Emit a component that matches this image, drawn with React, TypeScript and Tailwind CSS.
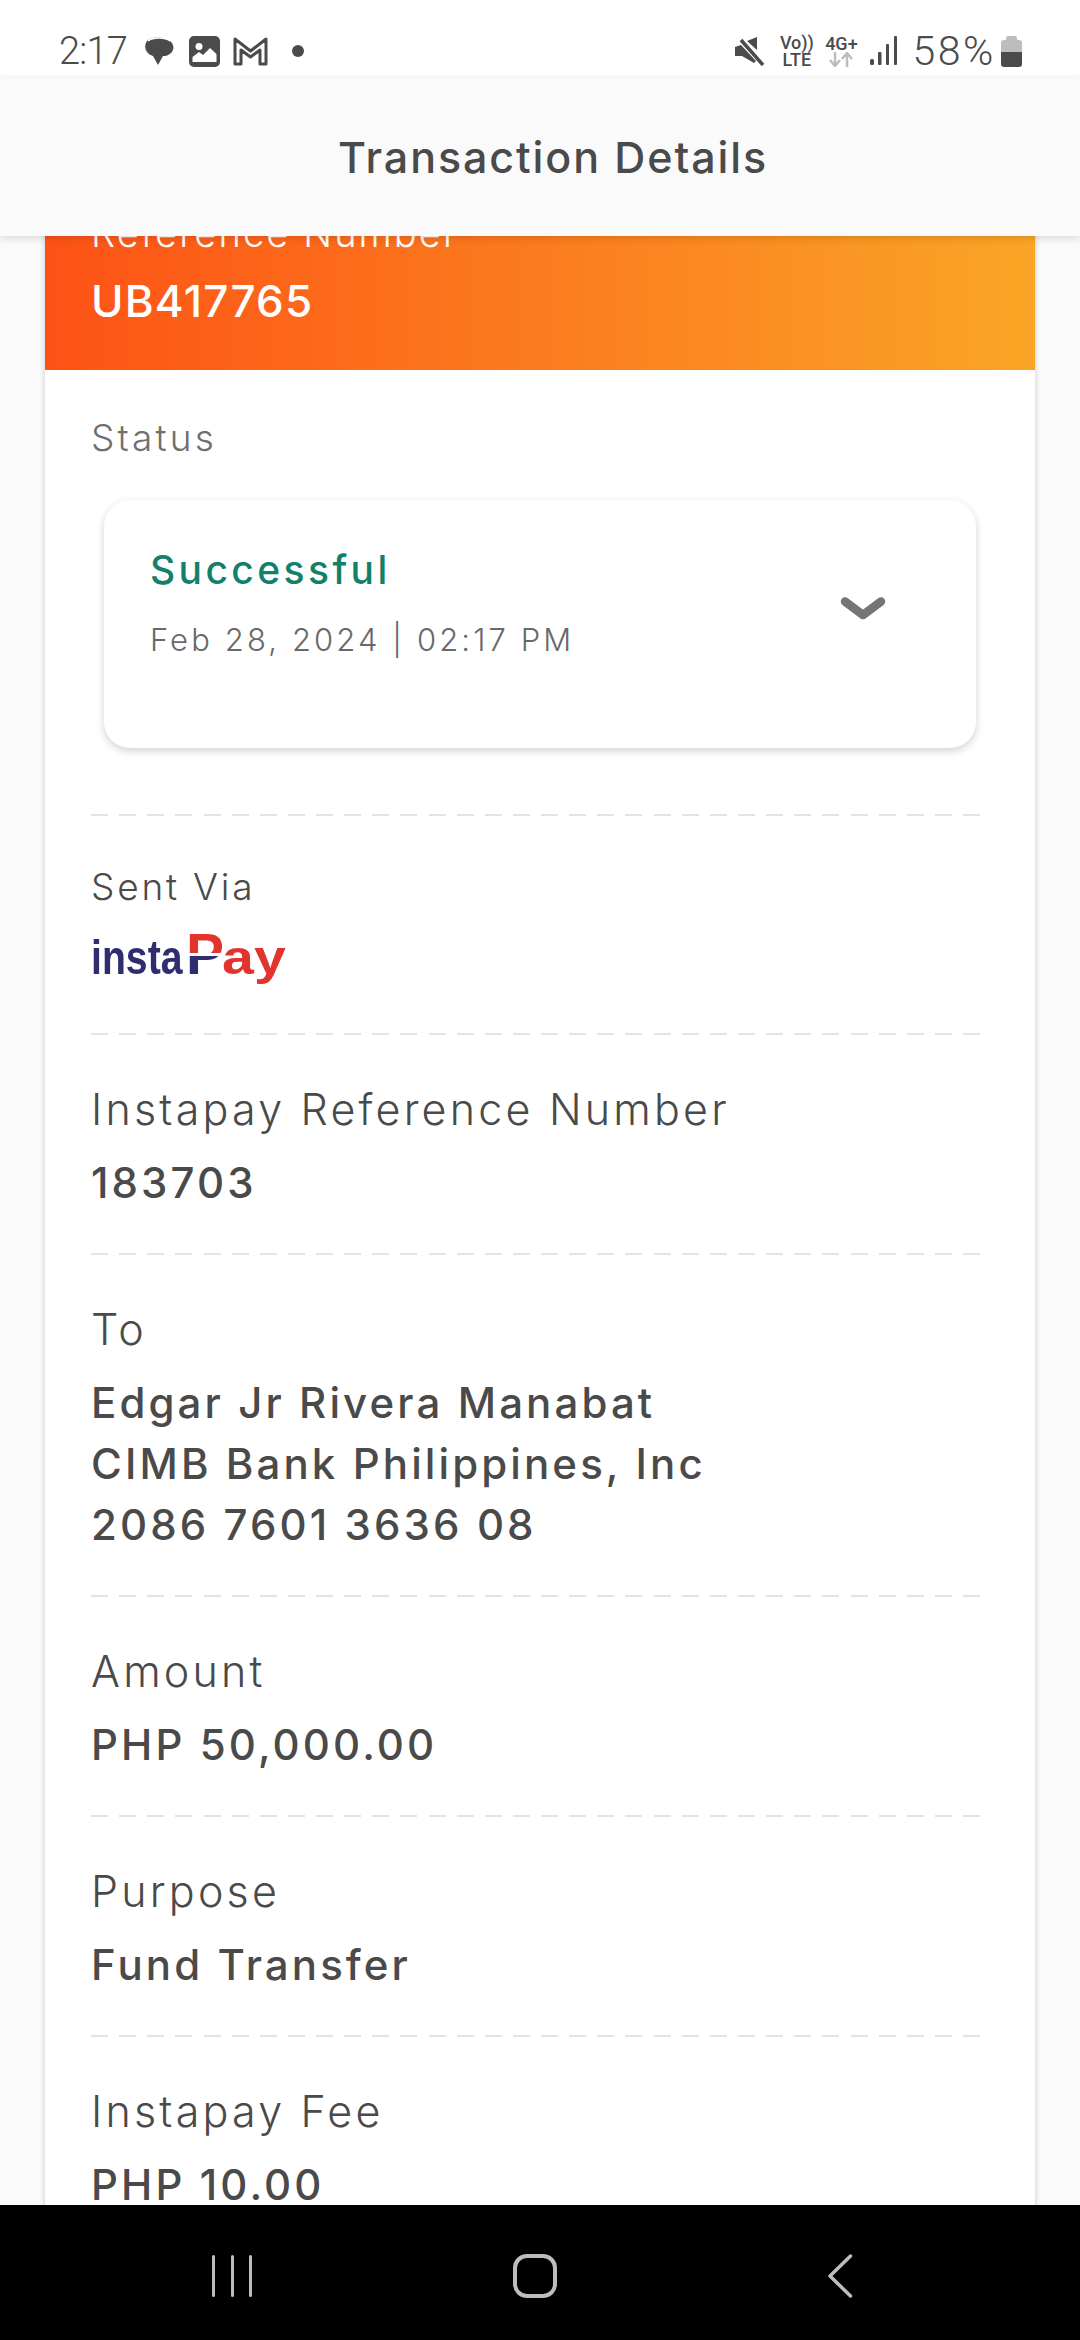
import React from "react";

const font = "font-['Inter','Liberation_Sans',sans-serif]";

function Dash() {
  return (
    <div className="ml-[46px] mr-[55px] h-[2px] bg-[repeating-linear-gradient(90deg,#e3e3e3_0,#e3e3e3_17px,transparent_17px,transparent_28.13px)]" />
  );
}

function Field({ label, lines }: { label: string; lines: string[] }) {
  return (
    <div className="pb-[40px] pl-[46px] pt-[51px]">
      <div className="text-[43px] leading-[46px] font-light tracking-[3.2px] whitespace-nowrap text-[#4a4a4a]">{label}</div>
      <div className="mt-[20px] text-[42px] leading-[61px] font-medium tracking-[3.1px] text-[#4a4a4a]">
        {lines.map((l) => (
          <div key={l} className="h-[61px] whitespace-nowrap">{l}</div>
        ))}
      </div>
    </div>
  );
}

function StatusLeft() {
  return (
    <div className="flex items-center">
      <span className="font-['Roboto',sans-serif] text-[38px] leading-[40px] font-light tracking-[-0.8px] text-[#4b4b4b]">2:17</span>
      <svg className="ml-[16px]" width="32" height="32" viewBox="0 0 32 32">
        <path d="M4 6 C8 1 24 1 29 8 C33 14 28 21 20 21 L15 30 L10 21 C3 19 0 12 4 6Z" fill="#4b4b4b" />
        <path d="M5 6 C10 2 22 2 27 6" stroke="#fff" strokeWidth="1.5" fill="none" />
      </svg>
      <svg className="ml-[14px]" width="31" height="31" viewBox="0 0 31 31">
        <rect width="31" height="31" rx="5" fill="#4b4b4b" />
        <circle cx="10" cy="10.5" r="3.5" fill="#fff" />
        <path d="M3.5 26 V21 L10 16 L14 19 L21 12 L27.5 18 V26Z" fill="#fff" />
      </svg>
      <svg className="ml-[13px]" width="35" height="30" viewBox="0 0 35 30">
        <path d="M2 3 L17.5 15 L33 3 V28 H27 V14 L17.5 21 L8 14 V28 H2Z" fill="none" stroke="#4b4b4b" strokeWidth="3" strokeLinejoin="round" />
      </svg>
      <span className="ml-[24px] h-[12px] w-[12px] rounded-full bg-[#4b4b4b]" />
    </div>
  );
}

function StatusRight() {
  return (
    <div className="flex items-center">
      <svg width="30" height="30" viewBox="0 0 30 30">
        <path d="M22 1 V14 L12 5Z" fill="#4b4b4b" />
        <path d="M0 11 L6 9 L21 25 L19 27 L7 20 H0Z" fill="#4b4b4b" />
        <path d="M6 4 L28 29" stroke="#4b4b4b" strokeWidth="3.5" />
      </svg>
      <div className="ml-[15px] flex w-[33px] flex-col items-center font-['Roboto',sans-serif] text-[18px] leading-[17px] font-medium text-[#4b4b4b]">
        <span>Vo))</span>
        <span>LTE</span>
      </div>
      <div className="ml-[11px] flex w-[34px] flex-col items-center font-['Roboto',sans-serif] text-[18px] leading-[17px] font-medium text-[#4b4b4b]">
        <span>4G+</span>
        <svg width="26" height="15" viewBox="0 0 26 15">
          <path d="M7 0 V13 M2 8 L7 14 L12 8" stroke="#bdbdbd" strokeWidth="2.5" fill="none" />
          <path d="M19 15 V2 M14 7 L19 1 L24 7" stroke="#bdbdbd" strokeWidth="2.5" fill="none" />
        </svg>
      </div>
      <svg className="ml-[12px]" width="28" height="30" viewBox="0 0 28 30">
        <rect x="0" y="23" width="4" height="6" rx="1.5" fill="#4b4b4b" />
        <rect x="8" y="16" width="3.5" height="13" rx="1" fill="#4b4b4b" />
        <rect x="16" y="8" width="3" height="21" rx="1" fill="#4b4b4b" />
        <rect x="24" y="0" width="3" height="29" rx="1" fill="#4b4b4b" />
      </svg>
      <span className="ml-[14px] font-['Roboto',sans-serif] text-[41px] leading-[40px] font-light tracking-[2.6px] text-[#4b4b4b]">58%</span>
      <div className="ml-[5px] flex h-[31px] w-[21px] flex-col items-center">
        <div className="h-[4px] w-[11px] rounded-t-[2px] bg-[#bdbdbd]" />
        <div className="h-[12px] w-full rounded-t-[3px] bg-[#bdbdbd]" />
        <div className="h-[15px] w-full rounded-b-[3px] bg-[#4b4b4b]" />
      </div>
    </div>
  );
}

function InstaPay() {
  return (
    <div className="mt-[20px] flex h-[56px] items-start font-['Liberation_Sans',sans-serif] font-bold">
      <span className="mt-[5px] w-[95px] origin-left scale-x-[0.8] text-[49px] leading-[50px] whitespace-nowrap text-[#2f2d6f]">insta</span>
      <span className="mt-[-1px] w-[36px] bg-[linear-gradient(180deg,#e2342d_0%,#e2342d_48%,#fff_48%,#fff_53%,#2f2d6f_53%,#2f2d6f_100%)] bg-clip-text text-[57px] leading-[56px] text-transparent">P</span>
      <span className="mt-[5px] origin-left scale-x-[1.17] text-[49px] leading-[50px] whitespace-nowrap text-[#e2342d]">ay</span>
    </div>
  );
}

function NavBar() {
  return (
    <nav className="z-20 flex h-[135px] shrink-0 items-center bg-black pl-[212px] pt-[6px]">
      <div className="flex h-[42px] w-[40px] justify-between">
        <span className="h-full w-[3px] rounded-full bg-[#bdbdbd]" />
        <span className="h-full w-[3px] rounded-full bg-[#bdbdbd]" />
        <span className="h-full w-[3px] rounded-full bg-[#bdbdbd]" />
      </div>
      <div className="ml-[261px] h-[44px] w-[44px] rounded-[14px] border-[4px] border-[#bdbdbd]" />
      <svg className="ml-[270px]" width="26" height="44" viewBox="0 0 26 44">
        <path d="M23.5 2 L3 22 L23.5 42" stroke="#bdbdbd" strokeWidth="3.5" strokeLinecap="round" strokeLinejoin="round" fill="none" />
      </svg>
    </nav>
  );
}

export default function App() {
  return (
    <div className={`${font} relative flex h-[2340px] w-[1080px] flex-col overflow-hidden bg-[#fafafa]`}>
      <div className="z-20 flex h-[78px] shrink-0 items-center justify-between bg-white pl-[59px] pr-[58px] pt-[24px]">
        <StatusLeft />
        <StatusRight />
      </div>
      <div className="z-20 flex h-[158px] shrink-0 items-center justify-center bg-[#fafafa] pl-[26px] shadow-[0_2px_8px_rgba(0,0,0,0.14)]">
        <h1 className="text-[43px] font-medium tracking-[1.9px] text-[#4a4a4a]">Transaction Details</h1>
      </div>

      <main className="min-h-0 flex-1 overflow-hidden px-[45px]">
        <div className="mt-[-54px] bg-white shadow-[0_0_6px_rgba(0,0,0,0.2)]">
          <div className="h-[188px] bg-[linear-gradient(90deg,#fd5216_0%,#faa526_100%)] pl-[46px] pt-[28px] text-white">
            <div className="text-[38px] leading-[46px] font-light tracking-[2.1px]">Reference Number</div>
            <div className="mt-[22px] text-[44px] leading-[46px] font-medium tracking-[1.2px]">UB417765</div>
          </div>

          <div className="pl-[46px] pt-[48px] text-[37px] leading-[40px] font-light tracking-[3.2px] text-[#6f6f6f]">Status</div>
          <div className="mx-[59px] mt-[42px] flex h-[248px] justify-between rounded-[26px] bg-white pl-[46px] pr-[90px] pt-[47px] shadow-[0_3px_8px_rgba(0,0,0,0.18)]">
            <div>
              <div className="text-[39px] leading-[46px] font-medium tracking-[3.4px] text-[#13806c]">Successful</div>
              <div className="mt-[29px] text-[31px] leading-[36px] font-light tracking-[3.1px] whitespace-nowrap text-[#696969]">Feb 28, 2024 | 02:17 PM</div>
            </div>
            <svg className="mt-[49px] ml-[-8px] shrink-0" width="46" height="26" viewBox="0 0 46 26">
              <path d="M5 5.5 L23 19 L41 5.5" stroke="#757575" strokeWidth="8.5" strokeLinecap="round" strokeLinejoin="round" fill="none" />
            </svg>
          </div>

          <div className="mt-[66px]"><Dash /></div>

          <div className="pb-[50px] pl-[46px] pt-[51px]">
            <div className="text-[37px] leading-[40px] font-light tracking-[2.8px] text-[#4a4a4a]">Sent Via</div>
            <InstaPay />
          </div>
          <Dash />

          <Field label="Instapay Reference Number" lines={["183703"]} />
          <Dash />
          <Field label="To" lines={["Edgar Jr Rivera Manabat", "CIMB Bank Philippines, Inc", "2086 7601 3636 08"]} />
          <Dash />
          <Field label="Amount" lines={["PHP 50,000.00"]} />
          <Dash />
          <Field label="Purpose" lines={["Fund Transfer"]} />
          <Dash />
          <Field label="Instapay Fee" lines={["PHP 10.00"]} />
        </div>
      </main>

      <NavBar />
    </div>
  );
}
